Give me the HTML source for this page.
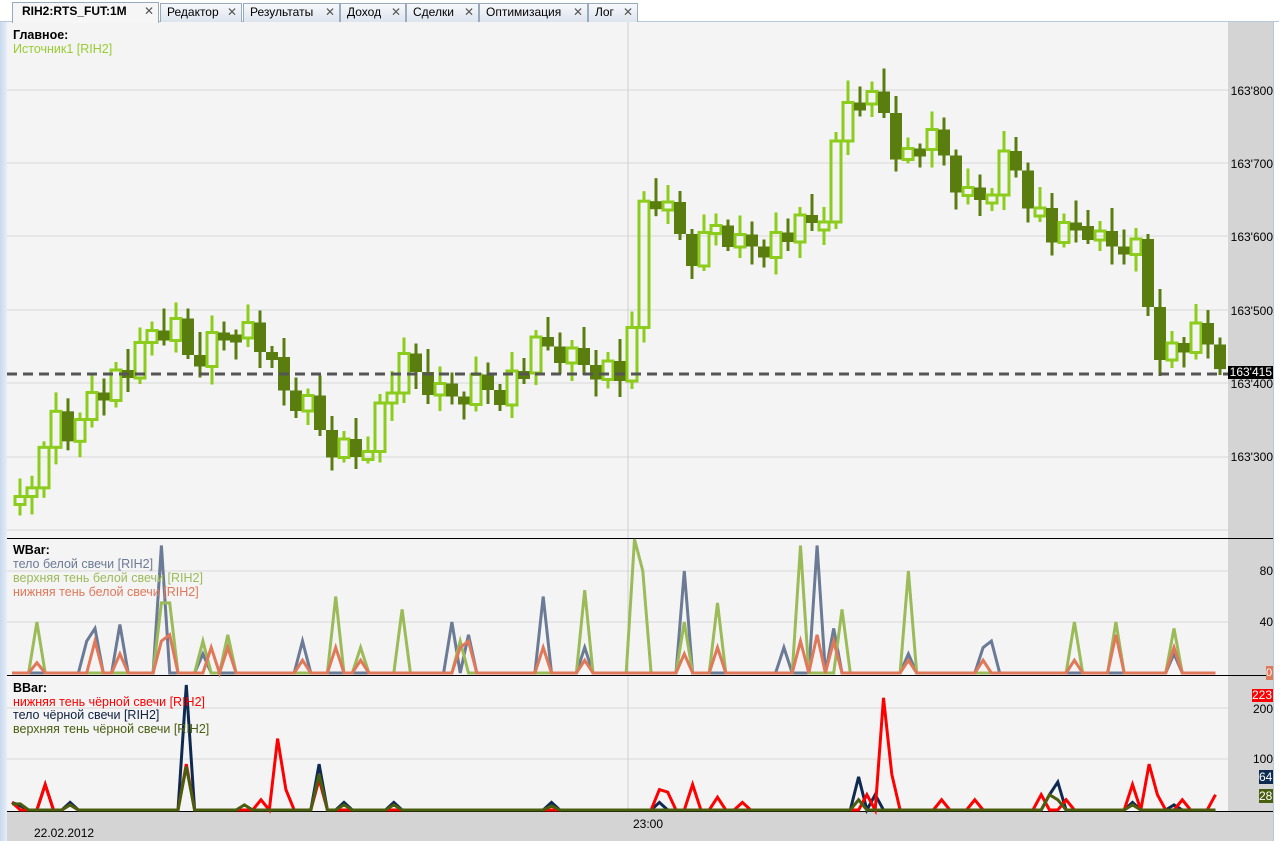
<!DOCTYPE html>
<html><head><meta charset="utf-8">
<style>
*{margin:0;padding:0;box-sizing:border-box}
body{width:1279px;height:841px;overflow:hidden;background:#f4f4f4;font-family:"Liberation Sans","DejaVu Sans",sans-serif;font-size:11px;position:relative}
#tabs{position:absolute;left:0;top:0;width:1279px;height:22px;background:#fff;border-bottom:1px solid #b8c8dc}
.tab{position:absolute;top:3px;height:19px;border:1px solid #9aaabd;border-bottom:none;background:linear-gradient(#f6f8fb,#dde4ee);font-size:12px;line-height:17px;padding-left:6px;color:#000;white-space:nowrap;overflow:hidden}
.tab.a{background:#f6f6f6;font-weight:bold;top:2px;height:21px;padding-left:9px}
.tab span{position:absolute;right:4px;top:0;color:#555;font-weight:normal;font-size:12px}
#left{position:absolute;left:0;top:22px;width:7px;height:819px;background:linear-gradient(90deg,#c8d8ee,#e6eef8)}
#axis{position:absolute;left:1228px;top:22px;width:45px;height:790px;background:#d4d4d4}
#rs{position:absolute;left:1273px;top:22px;width:6px;height:819px;background:#fff;border-left:1px solid #b8c8dc}
#bot{position:absolute;left:7px;top:812px;width:1266px;height:29px;background:#d4d4d4}
.lg{position:absolute;left:13px;line-height:14px;font-size:12.5px}
.ax{position:absolute;left:1229px;font-size:12px;color:#000;text-align:right;width:44px}
</style></head><body>
<div id="tabs">
<div class="tab a" style="left:12px;width:147px">RIH2:RTS_FUT:1M<span>✕</span></div>
<div class="tab" style="left:160px;width:82px">Редактор<span>✕</span></div>
<div class="tab" style="left:243px;width:97px">Результаты<span>✕</span></div>
<div class="tab" style="left:340px;width:66px">Доход<span>✕</span></div>
<div class="tab" style="left:406px;width:73px">Сделки<span>✕</span></div>
<div class="tab" style="left:479px;width:109px">Оптимизация<span>✕</span></div>
<div class="tab" style="left:588px;width:50px">Лог<span>✕</span></div>
</div>
<div id="left"></div>
<div id="axis"></div>
<div id="rs"></div>
<div id="bot"></div>
<svg id="sv" width="1279" height="841" style="position:absolute;left:0;top:0"></svg>
<div class="lg" style="top:28px;font-weight:bold">Главное:</div>
<div class="lg" style="top:42px;color:#99cc33">Источник1 [RIH2]</div>
<div class="lg" style="top:543px;font-weight:bold">WBar:</div>
<div class="lg" style="top:557px;color:#6b7a95">тело белой свечи [RIH2]</div>
<div class="lg" style="top:571px;color:#9bbb59">верхняя тень белой свечи [RIH2]</div>
<div class="lg" style="top:585px;color:#e0785a">нижняя тень белой свечи [RIH2]</div>
<div class="lg" style="top:681px;font-weight:bold">BBar:</div>
<div class="lg" style="top:695px;color:#f00">нижняя тень чёрной свечи [RIH2]</div>
<div class="lg" style="top:708px;color:#0f2040">тело чёрной свечи [RIH2]</div>
<div class="lg" style="top:722px;color:#4a5e10">верхняя тень чёрной свечи [RIH2]</div>
<div class="ax" style="top:84px">163'800</div>
<div class="ax" style="top:157px">163'700</div>
<div class="ax" style="top:230px">163'600</div>
<div class="ax" style="top:304px">163'500</div>
<div class="ax" style="top:377px">163'400</div>
<div class="ax" style="top:450px">163'300</div>
<div style="position:absolute;left:1228px;top:366px;width:45px;height:13px;background:#000;color:#fff;font-size:12px;line-height:13px;text-align:right;padding-right:1px">163'415</div>
<div class="ax" style="top:564px">80</div>
<div class="ax" style="top:615px">40</div>
<div style="position:absolute;left:1266px;top:666px;width:7px;height:14px;background:#e0785a;color:#fff;font-size:11px;line-height:14px">0</div>
<div style="position:absolute;left:1252px;top:689px;width:21px;height:13px;background:#f00;color:#fff;font-size:12px;line-height:13px">223</div>
<div class="ax" style="top:702px">200</div>
<div class="ax" style="top:752px">100</div>
<div style="position:absolute;left:1259px;top:770px;width:14px;height:14px;background:#0f2a50;color:#fff;font-size:12px;line-height:14px">64</div>
<div style="position:absolute;left:1259px;top:789px;width:14px;height:14px;background:#4a5e10;color:#fff;font-size:12px;line-height:14px">28</div>
<div style="position:absolute;left:34px;top:826px;font-size:12px">22.02.2012</div>
<div style="position:absolute;left:633px;top:817px;font-size:12px">23:00</div>
<script>
(function(){
var s=document.getElementById('sv'),h='';
function L(x1,y1,x2,y2,c,w,d){h+='<line x1="'+x1+'" y1="'+y1+'" x2="'+x2+'" y2="'+y2+'" stroke="'+c+'" stroke-width="'+(w||1)+'"'+(d?' stroke-dasharray="'+d+'"':'')+'/>';}
[90,163,236,310,383,457,530].forEach(function(y){L(7,y,1228,y,'#d8d8d8')});
[571,622].forEach(function(y){L(7,y,1228,y,'#d8d8d8')});
[708,759].forEach(function(y){L(7,y,1228,y,'#d8d8d8')});
L(628,22,628,812,'#cfcfcf');
L(7,538.5,1273,538.5,'#000');L(7,675.5,1273,675.5,'#000');L(7,811.5,1273,811.5,'#000');
var P=[[10,500],[20,500],[30,480],[45,460],[55,410],[70,430],[80,430],[90,390],[100,385],[110,380],[120,375],[130,370],[140,360],[150,335],[160,330],[175,330],[185,355],[195,355],[205,350],[215,340],[225,330],[235,320],[245,325],[255,340],[265,350],[275,385],[285,395],[295,400],[305,405],[315,420],[325,440],[335,445],[345,450],[355,455],[365,440],[375,420],[385,400],[395,380],[405,370],[415,375],[425,380],[435,395],[445,400],[455,395],[465,390],[475,385],[485,385],[495,390],[505,385],[515,375],[525,365],[535,355],[545,350],[555,350],[565,355],[575,365],[585,365],[595,365],[605,370],[615,375],[625,380],[634,290],[645,200],[655,200],[665,215],[675,230],[685,245],[695,260],[705,245],[715,225],[725,230],[735,240],[745,250],[755,240],[765,240],[775,240],[785,235],[795,235],[805,230],[815,225],[825,210],[835,160],[845,110],[855,85],[865,95],[875,105],[885,110],[895,140],[905,160],[915,145],[925,140],[935,150],[945,160],[955,180],[965,200],[975,205],[985,195],[995,175],[1005,160],[1015,165],[1025,185],[1035,205],[1045,225],[1055,240],[1065,240],[1075,230],[1085,225],[1095,240],[1105,250],[1115,245],[1125,240],[1135,245],[1145,290],[1155,335],[1165,350],[1175,350],[1185,345],[1195,340],[1205,345],[1215,355],[1222,360]];
function iy(x){for(var i=1;i<P.length;i++){if(x<=P[i][0]){var a=P[i-1],b=P[i];return a[1]+(b[1]-a[1])*(x-a[0])/(b[0]-a[0]);}}return P[P.length-1][1];}
var prev=iy(14),k=0;
for(var x=20;x<=1222;x+=12){k++;var c=iy(x)+((k*37)%11-5)*3.5;var o=prev;var t0=Math.min(o,c),b0=Math.max(o,c);if(b0-t0<8){b0=t0+8;}
var hi=t0-5-((k*13)%19),lo=b0+4+((k*7)%15);
var up=c<o;
if(up){L(x,hi,x,t0,'#8ccc1c',3);L(x,b0,x,lo,'#8ccc1c',3);h+='<rect x="'+(x-5)+'" y="'+t0+'" width="10" height="'+(b0-t0)+'" fill="none" stroke="#8ccc1c" stroke-width="3"/>';}
else{L(x,hi,x,lo,'#5a7d10',3);h+='<rect x="'+(x-6)+'" y="'+t0+'" width="12" height="'+(b0-t0)+'" fill="#5a7d10"/>';}
prev=c;}
L(7,374,1228,374,'#555',3,'10,6');
function line(base,sc,sp,col,w){var pts=[];for(var x=12;x<=1222;x+=8.3){var v=0;sp.forEach(function(p){if(Math.abs(p[0]-x)<4.2)v=p[1];});pts.push(x.toFixed(1)+','+(base-v*sc).toFixed(1));}h+='<polyline fill="none" stroke="'+col+'" stroke-width="'+w+'" points="'+pts.join(' ')+'"/>';}
line(673,1.275,[[88,25],[95,35],[118,38],[165,100],[205,15],[300,25],[455,40],[470,30],[540,60],[585,20],[683,80],[780,20],[815,100],[835,35],[910,15],[985,20],[992,25],[1175,15]],'#6b7a95',3);
line(673,1.275,[[35,40],[158,55],[167,55],[205,25],[225,30],[335,60],[362,20],[405,50],[458,25],[585,65],[633,105],[645,80],[683,40],[720,55],[800,100],[840,50],[910,80],[1075,40],[1112,40],[1175,35]],'#9bbb59',3);
line(673,1.275,[[35,8],[95,25],[118,15],[158,25],[167,30],[215,20],[225,20],[300,10],[335,20],[362,10],[458,20],[470,25],[540,20],[585,10],[683,15],[720,20],[800,25],[815,30],[835,25],[910,10],[985,10],[1075,10],[1112,30],[1175,20]],'#e0785a',3);
line(810,0.51,[[14,15],[20,8],[45,50],[70,15],[185,245],[320,90],[345,15],[395,15],[550,15],[660,15],[860,65],[878,30],[1050,30],[1055,55],[1130,15],[1175,10],[1222,64]],'#0f2a50',3);
line(810,0.51,[[14,15],[45,50],[70,10],[185,90],[265,20],[275,140],[285,40],[320,60],[660,40],[670,35],[690,50],[720,25],[745,15],[865,30],[885,220],[895,70],[940,20],[975,20],[1045,30],[1062,20],[1130,50],[1150,90],[1160,30],[1185,20],[1212,30],[1222,223]],'#f00',3);
line(810,0.51,[[14,12],[20,12],[70,10],[185,85],[245,10],[320,70],[345,10],[395,10],[550,8],[860,20],[1050,30],[1055,20],[1130,10],[1222,28]],'#4a5e10',3);
s.innerHTML=h;
})();
</script>
</body></html>
